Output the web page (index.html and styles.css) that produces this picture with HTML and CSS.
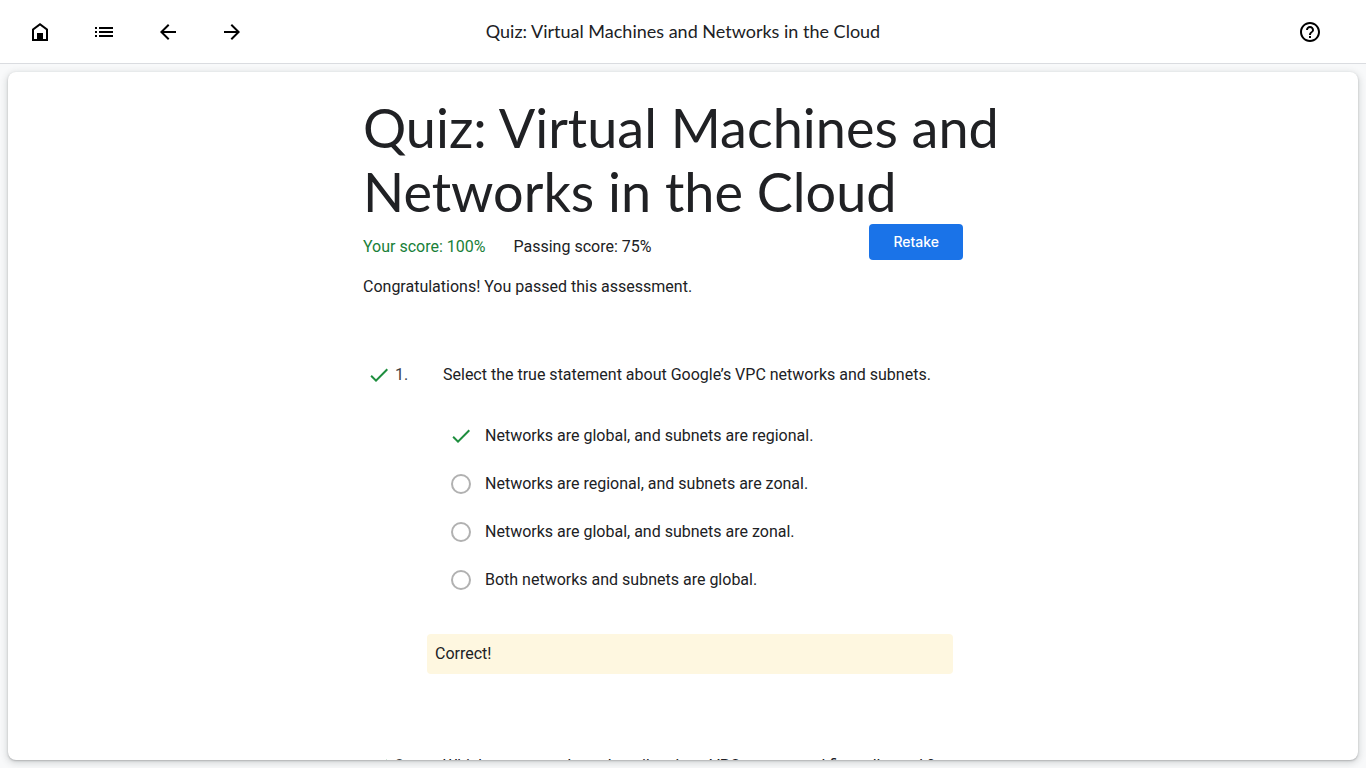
FILE: index.html
```html
<!DOCTYPE html>
<html lang="en">
<head>
  <meta charset="utf-8">
  <meta name="viewport" content="width=device-width, initial-scale=1">
  <title>Quiz: Virtual Machines and Networks in the Cloud</title>
  <link rel="stylesheet" href="styles.css">
</head>
<body>
  <header class="toolbar">
    <nav class="toolbar-group" aria-label="Course">
      <button class="icon-button" type="button" aria-label="Home">
        <svg class="icon" viewBox="0 0 24 24"><path d="M4 21V9l8-6 8 6v12H4zm2-2h12v-9l-6-4.500L6 10v9z"/><path d="M9 13h6v7H9z"/></svg>
      </button>
      <button class="icon-button" type="button" aria-label="Outline">
        <svg class="icon" viewBox="0 0 24 24"><path d="M3 7h2v2H3zM3 11h2v2H3zM3 15h2v2H3zM7 7h14v2H7zM7 11h14v2H7zM7 15h14v2H7z"/></svg>
      </button>
      <button class="icon-button" type="button" aria-label="Previous">
        <svg class="icon" viewBox="0 0 24 24"><path d="M20 11H7.830l5.590-5.590L12 4l-8 8 8 8 1.410-1.410L7.830 13H20v-2z"/></svg>
      </button>
      <button class="icon-button" type="button" aria-label="Next">
        <svg class="icon" viewBox="0 0 24 24"><path d="M12 4l-1.410 1.410L16.170 11H4v2h12.170l-5.580 5.590L12 20l8-8z"/></svg>
      </button>
    </nav>
    <p class="toolbar-title">Quiz: Virtual Machines and Networks in the Cloud</p>
    <div class="toolbar-group toolbar-end">
      <button class="icon-button" type="button" aria-label="Help">
        <svg class="icon" viewBox="0 0 24 24"><path d="M11 18h2v-2h-2v2zm1-16C6.480 2 2 6.480 2 12s4.480 10 10 10 10-4.480 10-10S17.520 2 12 2zm0 18c-4.410 0-8-3.590-8-8s3.590-8 8-8 8 3.590 8 8-3.590 8-8 8zm0-14c-2.210 0-4 1.790-4 4h2c0-1.100.900-2 2-2s2 .900 2 2c0 2-3 1.750-3 5h2c0-2.250 3-2.500 3-5 0-2.210-1.790-4-4-4z"/></svg>
      </button>
    </div>
  </header>

  <main class="card">
    <div class="content">
      <h1 class="title">Quiz: Virtual Machines and Networks in the Cloud</h1>
      <div class="summary">
        <p class="score score-passed">Your score: 100%</p>
        <p class="score">Passing score: 75%</p>
        <button class="retake" type="button">Retake</button>
      </div>
      <p class="message">Congratulations! You passed this assessment.</p>

      <section class="question">
        <div class="question-head">
          <svg class="icon icon-check" viewBox="0 0 24 24"><path d="M9 16.170L4.830 12l-1.420 1.410L9 19 21 7l-1.410-1.410z"/></svg>
          <span class="number">1.</span>
          <h2 class="prompt">Select the true statement about Google’s VPC networks and subnets.</h2>
        </div>
        <div class="options">
          <label class="option">
            <span class="marker">
              <input class="radio" type="radio" name="q1" checked>
              <svg class="icon icon-check" viewBox="0 0 24 24"><path d="M9 16.170L4.830 12l-1.420 1.410L9 19 21 7l-1.410-1.410z"/></svg>
            </span>
            <span>Networks are global, and subnets are regional.</span>
          </label>
          <label class="option">
            <span class="marker"><input class="radio" type="radio" name="q1"></span>
            <span>Networks are regional, and subnets are zonal.</span>
          </label>
          <label class="option">
            <span class="marker"><input class="radio" type="radio" name="q1"></span>
            <span>Networks are global, and subnets are zonal.</span>
          </label>
          <label class="option">
            <span class="marker"><input class="radio" type="radio" name="q1"></span>
            <span>Both networks and subnets are global.</span>
          </label>
        </div>
        <p class="feedback">Correct!</p>
      </section>

      <section class="question">
        <div class="question-head">
          <svg class="icon icon-check" viewBox="0 0 24 24"><path d="M9 16.170L4.830 12l-1.420 1.410L9 19 21 7l-1.410-1.410z"/></svg>
          <span class="number">2.</span>
          <h2 class="prompt">Which statement best describes how VPC routers and firewalls work?</h2>
        </div>
      </section>
    </div>
  </main>
</body>
</html>
```
FILE: styles.css
```css
* {
  box-sizing: border-box;
  margin: 0;
}

body {
  display: flex;
  flex-direction: column;
  height: 100vh;
  background: #f8f9fa;
  color: #202124;
  font: 16px/24px Roboto, "Liberation Sans", sans-serif;
}

.toolbar {
  display: grid;
  grid-template-columns: 1fr auto 1fr;
  align-items: center;
  height: 64px;
  padding: 0 16px;
  flex: none;
  background: #fff;
  border-bottom: 1px solid #dadce0;
}

.toolbar-group {
  display: flex;
  gap: 16px;
}

.toolbar-end {
  justify-content: flex-end;
  padding-right: 16px;
}

.toolbar-title {
  padding-bottom: 2px;
  font: 18px/24px "Google Sans", Lato, sans-serif;
}

.icon-button {
  display: grid;
  place-items: center;
  width: 48px;
  height: 48px;
  padding: 0;
  border: 0;
  border-radius: 50%;
  background: none;
  color: #000;
  cursor: pointer;
}

.icon {
  display: block;
  flex: none;
  width: 24px;
  height: 24px;
  fill: currentColor;
}

.icon-check {
  color: #1e8e3e;
}

.card {
  flex: 1;
  min-height: 0;
  margin: 8px;
  padding: 24px 16px 0;
  overflow: hidden;
  background: #fff;
  border-radius: 8px;
  box-shadow: 0 1px 2px rgba(60, 64, 67, 0.3), 0 2px 6px 2px rgba(60, 64, 67, 0.15);
}

.content {
  max-width: 640px;
  margin: 0 auto;
}

.title {
  font: 400 54px/64px "Google Sans", Lato, sans-serif;
}

.summary {
  display: flex;
  align-items: flex-start;
  gap: 28px;
  padding-right: 40px;
}

.score {
  padding-top: 11px;
}

.score-passed {
  color: #188038;
}

.retake {
  height: 36px;
  margin-left: auto;
  padding: 0 24px;
  border: 0;
  border-radius: 4px;
  background: #1a73e8;
  color: #fff;
  font: 500 14px/20px "Google Sans", Inter, sans-serif;
  cursor: pointer;
}

.message {
  margin-top: 15px;
}

.question {
  margin-top: 80px;
}

.message + .question {
  margin-top: 64px;
}

.question-head {
  display: flex;
  gap: 4px;
  padding-left: 4px;
}

.number {
  flex: none;
  width: 44px;
  color: #3c4043;
}

.prompt {
  font: inherit;
}

.options {
  display: grid;
  margin: 25px 0 30px;
  padding-left: 86px;
}

.option {
  display: flex;
  align-items: center;
  gap: 12px;
  height: 48px;
}

.marker {
  display: grid;
  place-items: center;
  width: 24px;
  height: 24px;
}

.marker > * {
  grid-area: 1 / 1;
}

.radio {
  appearance: none;
  width: 20px;
  height: 20px;
  border: 2px solid #b1b1b1;
  border-radius: 50%;
}

.radio:checked {
  border-color: transparent;
}

.feedback {
  margin: 0 50px 0 64px;
  padding: 8px;
  border-radius: 4px;
  background: #fef7e0;
}
```
